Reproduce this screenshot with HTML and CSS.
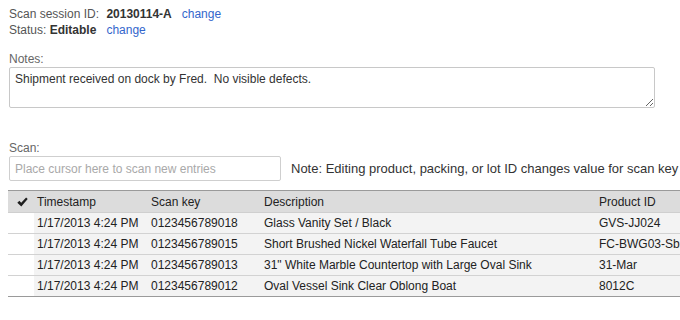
FILE: index.html
```html
<!DOCTYPE html>
<html>
<head>
<meta charset="utf-8">
<link rel="stylesheet" href="styles.css">
</head>
<body>
<div class="page">
  <div class="meta">
    <div class="meta-line">Scan session ID: <b class="val val-id">20130114-A</b><a class="link" href="#">change</a></div>
    <div class="meta-line">Status: <b class="val">Editable</b><a class="link" href="#">change</a></div>
  </div>

  <div class="field notes-field">
    <div class="label">Notes:</div>
    <textarea class="notes">Shipment received on dock by Fred.  No visible defects.</textarea>
  </div>

  <div class="field scan-field">
    <div class="label">Scan:</div>
    <div class="scan-row">
      <input class="scan-input" type="text" placeholder="Place cursor here to scan new entries">
      <span class="scan-note">Note: Editing product, packing, or lot ID changes value for scan key</span>
    </div>
  </div>

  <div class="grid-wrap">
    <table class="grid">
      <colgroup>
        <col class="c-chk"><col class="c-ts"><col class="c-key"><col class="c-desc"><col class="c-pid">
      </colgroup>
      <thead>
        <tr>
          <th class="chk"><svg class="check" width="11" height="10" viewBox="0 0 11 10"><path d="M0.3 5.7 L2.4 3.8 L4.2 5.8 L9.1 0.4 L10.7 1.9 L4.3 9.4 Z" fill="#1e1e1e"/></svg></th>
          <th>Timestamp</th>
          <th>Scan key</th>
          <th>Description</th>
          <th>Product ID</th>
        </tr>
      </thead>
      <tbody>
        <tr><td class="chk"></td><td>1/17/2013 4:24 PM</td><td>0123456789018</td><td>Glass Vanity Set / Black</td><td>GVS-JJ024</td></tr>
        <tr><td class="chk"></td><td>1/17/2013 4:24 PM</td><td>0123456789015</td><td>Short Brushed Nickel Waterfall Tube Faucet</td><td>FC-BWG03-Sbn</td></tr>
        <tr><td class="chk"></td><td>1/17/2013 4:24 PM</td><td>0123456789013</td><td>31" White Marble Countertop with Large Oval Sink</td><td>31-Mar</td></tr>
        <tr><td class="chk"></td><td>1/17/2013 4:24 PM</td><td>0123456789012</td><td>Oval Vessel Sink Clear Oblong Boat</td><td>8012C</td></tr>
      </tbody>
    </table>
  </div>
</div>
</body>
</html>
```

FILE: styles.css
```css
html, body {
  margin: 0;
  padding: 0;
  overflow: hidden;
  background: #fff;
}
body {
  font-family: "Liberation Sans", Arial, sans-serif;
  font-size: 12px;
  line-height: 16px;
  color: #555;
}
.page {
  padding: 6px 0 0 9px;
  width: 780px;
}
.meta-line {
  height: 16px;
  white-space: nowrap;
}
.val {
  color: #333;
  font-weight: bold;
}
.val-id {
  margin-left: 4px;
}
.link {
  color: #3366cc;
  text-decoration: none;
  margin-left: 10px;
}
.field .label {
  color: #666;
  height: 16px;
}
.notes-field {
  margin-top: 13px;
}
.notes {
  display: block;
  box-sizing: border-box;
  width: 646px;
  height: 41px;
  margin: 0;
  padding: 3px 5px;
  border: 1px solid #c8c8c8;
  border-radius: 2px;
  font-family: "Liberation Sans", Arial, sans-serif;
  font-size: 12px;
  line-height: 16px;
  color: #333;
  resize: both;
  outline: none;
}
.scan-field {
  margin-top: 32px;
}
.scan-row {
  display: flex;
  align-items: center;
  gap: 10px;
}
.scan-input {
  box-sizing: border-box;
  width: 272px;
  height: 25px;
  margin: 0;
  padding: 0 5px;
  border: 1px solid #cfcfcf;
  border-radius: 2px;
  font-family: "Liberation Sans", Arial, sans-serif;
  font-size: 12px;
  color: #333;
  outline: none;
}
.scan-input::placeholder {
  color: #a9a9a9;
}
.scan-note {
  color: #333;
  font-size: 13px;
  white-space: nowrap;
}
.grid-wrap {
  margin-top: 9px;
  margin-left: -1px;
}
.grid {
  border-collapse: collapse;
  table-layout: fixed;
  width: 760px;
  color: #222;
}
.c-chk { width: 26px; }
.c-ts { width: 114px; }
.c-key { width: 113px; }
.c-desc { width: 335px; }
.c-pid { width: 172px; }
.grid th {
  background: #dcdcdc;
  font-weight: normal;
  text-align: left;
  height: 21px;
  padding: 0 3px;
  border-top: 1px solid #9a9a9a;
  border-bottom: 1px solid #cfcfcf;
  white-space: nowrap;
}
.grid td {
  background: #f3f3f3;
  height: 20px;
  padding: 0 3px;
  border-bottom: 1px solid #d2d2d2;
  white-space: nowrap;
  overflow: hidden;
}
.grid tbody tr:last-child td {
  border-bottom: 1px solid #9a9a9a;
}
.grid td.chk {
  background: #fff;
}
.grid th.chk {
  padding: 0 0 0 9px;
}
.check {
  display: block;
}
```
